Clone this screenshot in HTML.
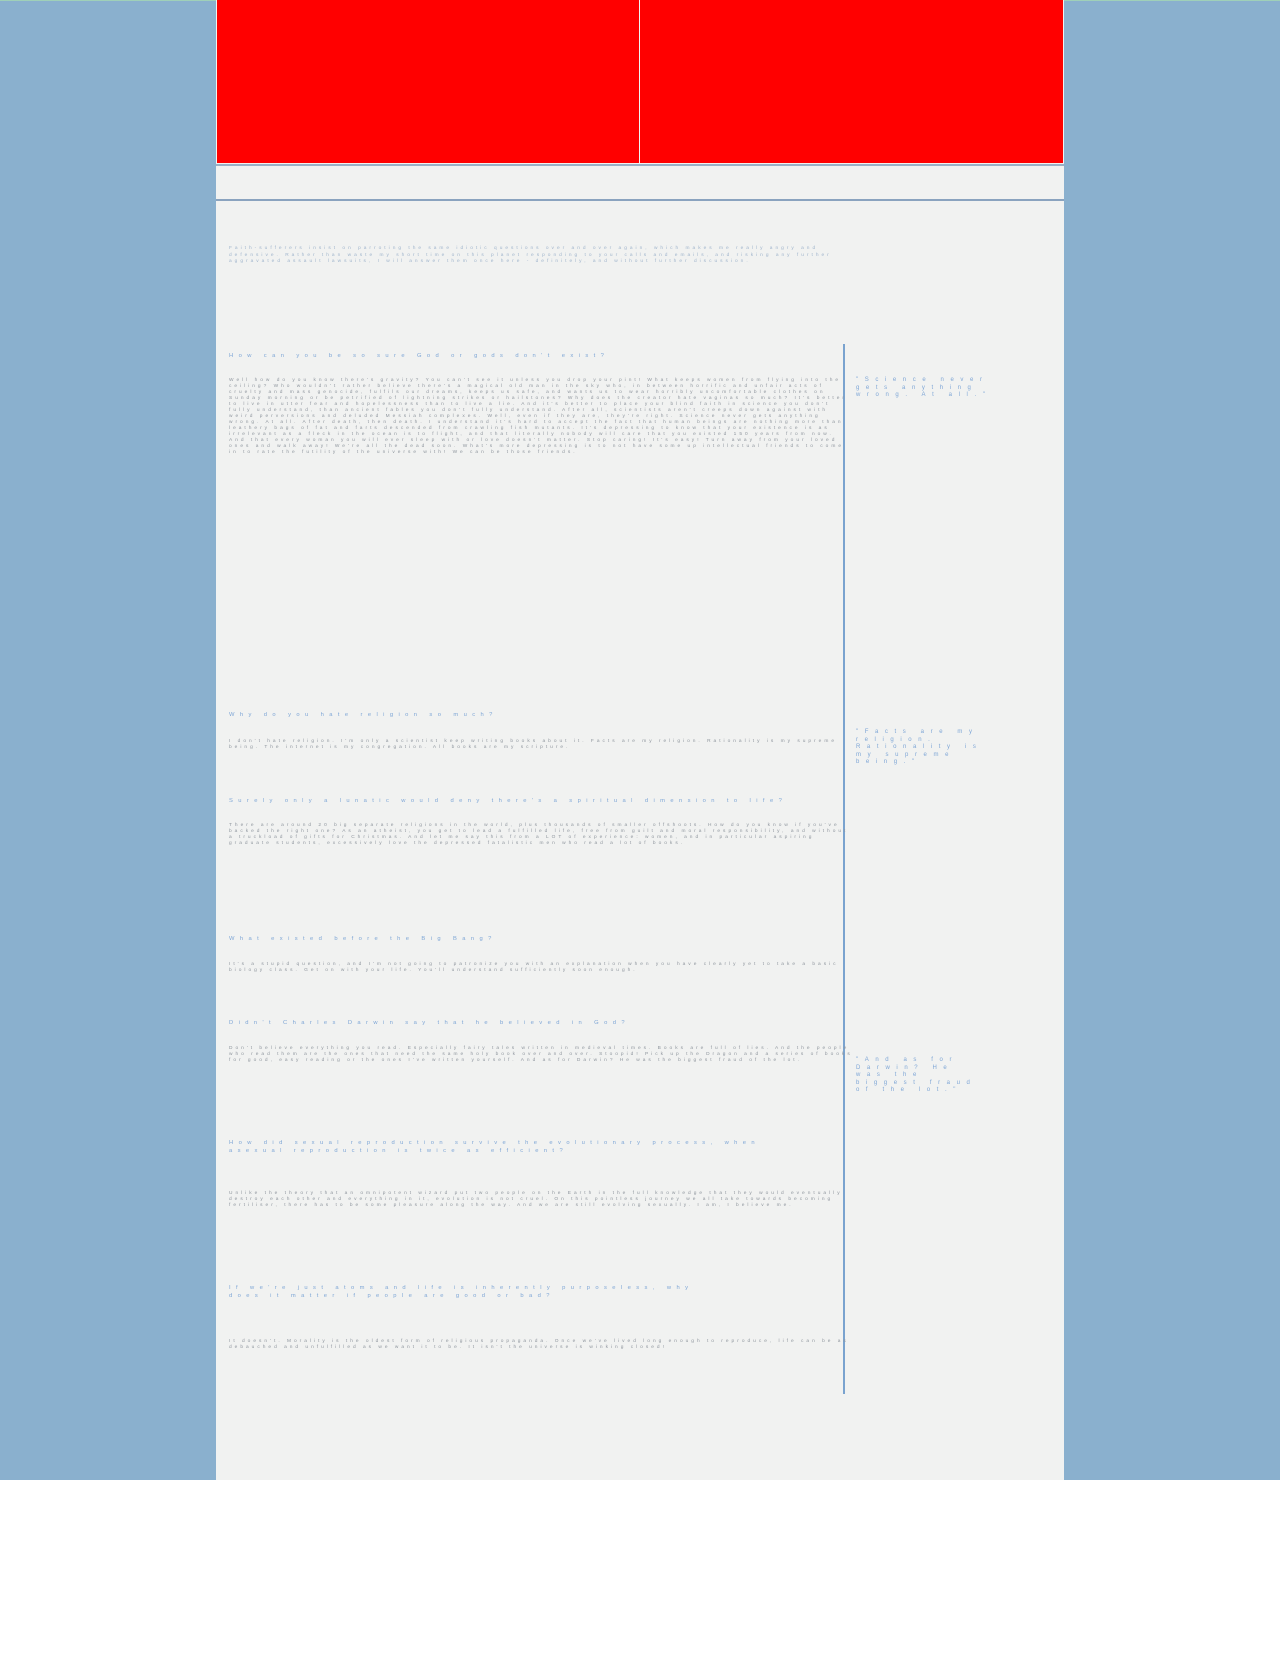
<!DOCTYPE html>
<html><head><meta charset="utf-8"><style>
*{margin:0;padding:0;box-sizing:border-box}
body{width:1280px;height:1660px;background:#fff;font-family:"Liberation Sans",sans-serif;position:relative;overflow:hidden}
#bg{position:absolute;left:0;top:0;width:1280px;height:1480px;background:#8ab0ce;border-top:1px solid #9fd0b8}
#wrap{position:absolute;left:216px;top:0;width:848px;height:1480px;background:#f1f2f1}
.red{position:absolute;top:0;height:163px;background:#ff0000}
#nav{position:absolute;left:0;top:164px;width:848px;height:37px;border-top:2px solid #9ab0c6;border-bottom:2px solid #8aa3bf;background:#f1f2f1}
.t{position:absolute;left:13px;font-size:4.8px;letter-spacing:3px;line-height:6px;color:#8e959d;width:625px}
.h{position:absolute;left:13px;font-size:5.8px;letter-spacing:5.4px;line-height:8px;color:#7ea6d6;width:520px}
.q{position:absolute;left:640px;font-size:6px;letter-spacing:6.6px;line-height:7.5px;color:#7ea6d6;width:200px}
#vl{position:absolute;left:627px;top:344px;width:2px;height:1050px;background:#7aa3cf}
</style></head><body>
<div id="bg"></div>
<div id="wrap">
<div class="red" style="left:1px;width:422px"></div>
<div class="red" style="left:424px;width:423px"></div>
<div id="nav"></div>
<div class="t" style="top:246px;width:615px;line-height:6.5px;color:#9fb4cc">Faith-sufferers insist on parroting the same idiotic questions over and over again, which makes me really angry and defensive. Rather than waste my short time on this planet responding to your calls and emails, and risking any further aggravated assault lawsuits, I will answer them once here - definitely, and without further discussion.</div>

<div id="vl"></div>

<div class="h" style="top:352px">How can you be so sure God or gods don't exist?</div>
<div class="t" style="top:378px">Well how do you know there's gravity? You can't see it unless you drop your pint! What keeps women from flying into the ceiling? Who wouldn't rather believe there's a magical old man in the sky who, in between horrific and unfair acts of cruelty and mass genocide, fulfils our dreams, keeps us safe, and wants us to wear horribly uncomfortable clothes on Sunday morning or be petrified of lightning strikes or hailstones? Why does the creator hate vaginas so much? It's better to live in utter fear and hopelessness than to live a lie. And it's better to place your blind faith in science you don't fully understand, than ancient fables you don't fully understand. After all, scientists aren't creeps down against with weird perversions and deluded Messiah complexes. Well, even if they are, they're right. Science never gets anything wrong. At all. After death, then death. I understand it's hard to accept the fact that human beings are nothing more than leathery bags of fat and farts descended from crawling fish mutants. It's depressing to know that your existence is as irrelevant as a fleck in the ocean is to flight, and that literally nobody will care that you existed 150 years from now. And that every woman you will ever sleep with or love doesn't matter. Stop caring! It's easy! Turn away from your loved ones and walk away! We're all the dead soon. What's more depressing is to not have some up intellectual friends to come in to rate the futility of the universe with! We can be those friends.</div>
<div class="q" style="top:377px;width:165px">"Science never gets anything wrong. At all."</div>

<div class="h" style="top:711px">Why do you hate religion so much?</div>
<div class="t" style="top:739px">I don't hate religion. I'm only a scientist keep writing books about it. Facts are my religion. Rationality is my supreme being. The internet is my congregation. All books are my scripture.</div>
<div class="q" style="top:729px;width:150px">"Facts are my religion. Rationality is my supreme being."</div>

<div class="h" style="top:797px;width:620px">Surely only a lunatic would deny there's a spiritual dimension to life?</div>
<div class="t" style="top:823px">There are around 20 big separate religions in the world, plus thousands of smaller offshoots. How do you know if you've backed the right one? As an atheist, you get to lead a fulfilled life, free from guilt and moral responsibility, and without a truckload of gifts for Christmas. And let me say this from a LOT of experience: women, and in particular aspiring graduate students, excessively love the depressed fatalistic men who read a lot of books.</div>

<div class="h" style="top:935px">What existed before the Big Bang?</div>
<div class="t" style="top:962px">It's a stupid question, and I'm not going to patronize you with an explanation when you have clearly yet to take a basic biology class. Get on with your life. You'll understand sufficiently soon enough.</div>

<div class="h" style="top:1019px;width:620px">Didn't Charles Darwin say that he believed in God?</div>
<div class="t" style="top:1046px">Don't believe everything you read. Especially fairy tales written in medieval times. Books are full of lies. And the people who read them are the ones that need the same holy book over and over. Stoopid! Pick up the Dragon and a series of books for good, easy reading or the ones I've written yourself. And as for Darwin? He was the biggest fraud of the lot.</div>
<div class="q" style="top:1057px;width:125px">"And as for Darwin? He was the biggest fraud of the lot."</div>

<div class="h" style="top:1139px;width:560px">How did sexual reproduction survive the evolutionary process, when asexual reproduction is twice as efficient?</div>
<div class="t" style="top:1191px">Unlike the theory that an omnipotent wizard put two people on the Earth in the full knowledge that they would eventually destroy each other and everything in it, evolution is not cruel. On this pointless journey we all take towards becoming fertiliser, there has to be some pleasure along the way. And we are still evolving sexually. I am, I believe me.</div>

<div class="h" style="top:1284px;width:470px">If we're just atoms and life is inherently purposeless, why does it matter if people are good or bad?</div>
<div class="t" style="top:1339px">It doesn't. Morality is the oldest form of religious propaganda. Once we've lived long enough to reproduce, life can be as debauched and unfulfilled as we want it to be. It isn't the universe is winking closed!</div>
</div>
</body></html>
